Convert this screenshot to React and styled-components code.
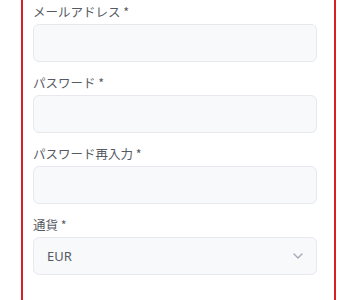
import React from "react"
import styled, { createGlobalStyle } from "styled-components"

const GlobalStyle = createGlobalStyle`
  html, body {
    margin: 0;
    padding: 0;
    background: #ffffff;
    font-family: "Noto Sans", "Noto Sans CJK JP", sans-serif;
  }
`

const Frame = styled.div`
  box-sizing: border-box;
  margin-left: 21px;
  width: 315px;
  height: 300px;
  border-left: 2px solid #d42020;
  border-right: 2px solid #d42020;
  padding: 3px 17px 0 10px;
  overflow: hidden;
`

const Form = styled.form`
  display: flex;
  flex-direction: column;
  gap: 12px;
`

const Field = styled.div`
  display: flex;
  flex-direction: column;
  gap: 3px;
`

const Label = styled.label`
  font-size: 12.5px;
  line-height: 18px;
  color: #555a63;
  font-family: "Noto Sans CJK JP", "Noto Sans", sans-serif;
`

const Input = styled.input`
  box-sizing: border-box;
  height: 38px;
  width: 100%;
  border: 1px solid #e7e9ee;
  border-radius: 6px;
  background: #f8f9fb;
  padding: 0 13px;
  font-size: 13px;
  outline: none;
`

const SelectBox = styled.div`
  position: relative;
  box-sizing: border-box;
  height: 38px;
  border: 1px solid #e7e9ee;
  border-radius: 6px;
  background: #f8f9fb;
  padding: 0 13px;
  display: flex;
  align-items: center;
  justify-content: space-between;
  font-size: 13px;
  color: #555a63;
`

const Chevron = () => (
  <svg width="10" height="6" viewBox="0 0 10 6" fill="none">
    <path d="M1 1l4 4 4-4" stroke="#a4a8b8" strokeWidth="1.4" strokeLinecap="round" strokeLinejoin="round" />
  </svg>
)

const fields = ["メールアドレス *", "パスワード *", "パスワード再入力 *"]

export default function App() {
  return (
    <>
      <GlobalStyle />
      <Frame>
        <Form>
          {fields.map(f => (
            <Field key={f}>
              <Label>{f}</Label>
              <Input type="text" />
            </Field>
          ))}
          <Field>
            <Label>通貨 *</Label>
            <SelectBox>
              <span>EUR</span>
              <Chevron />
            </SelectBox>
          </Field>
        </Form>
      </Frame>
    </>
  )
}
